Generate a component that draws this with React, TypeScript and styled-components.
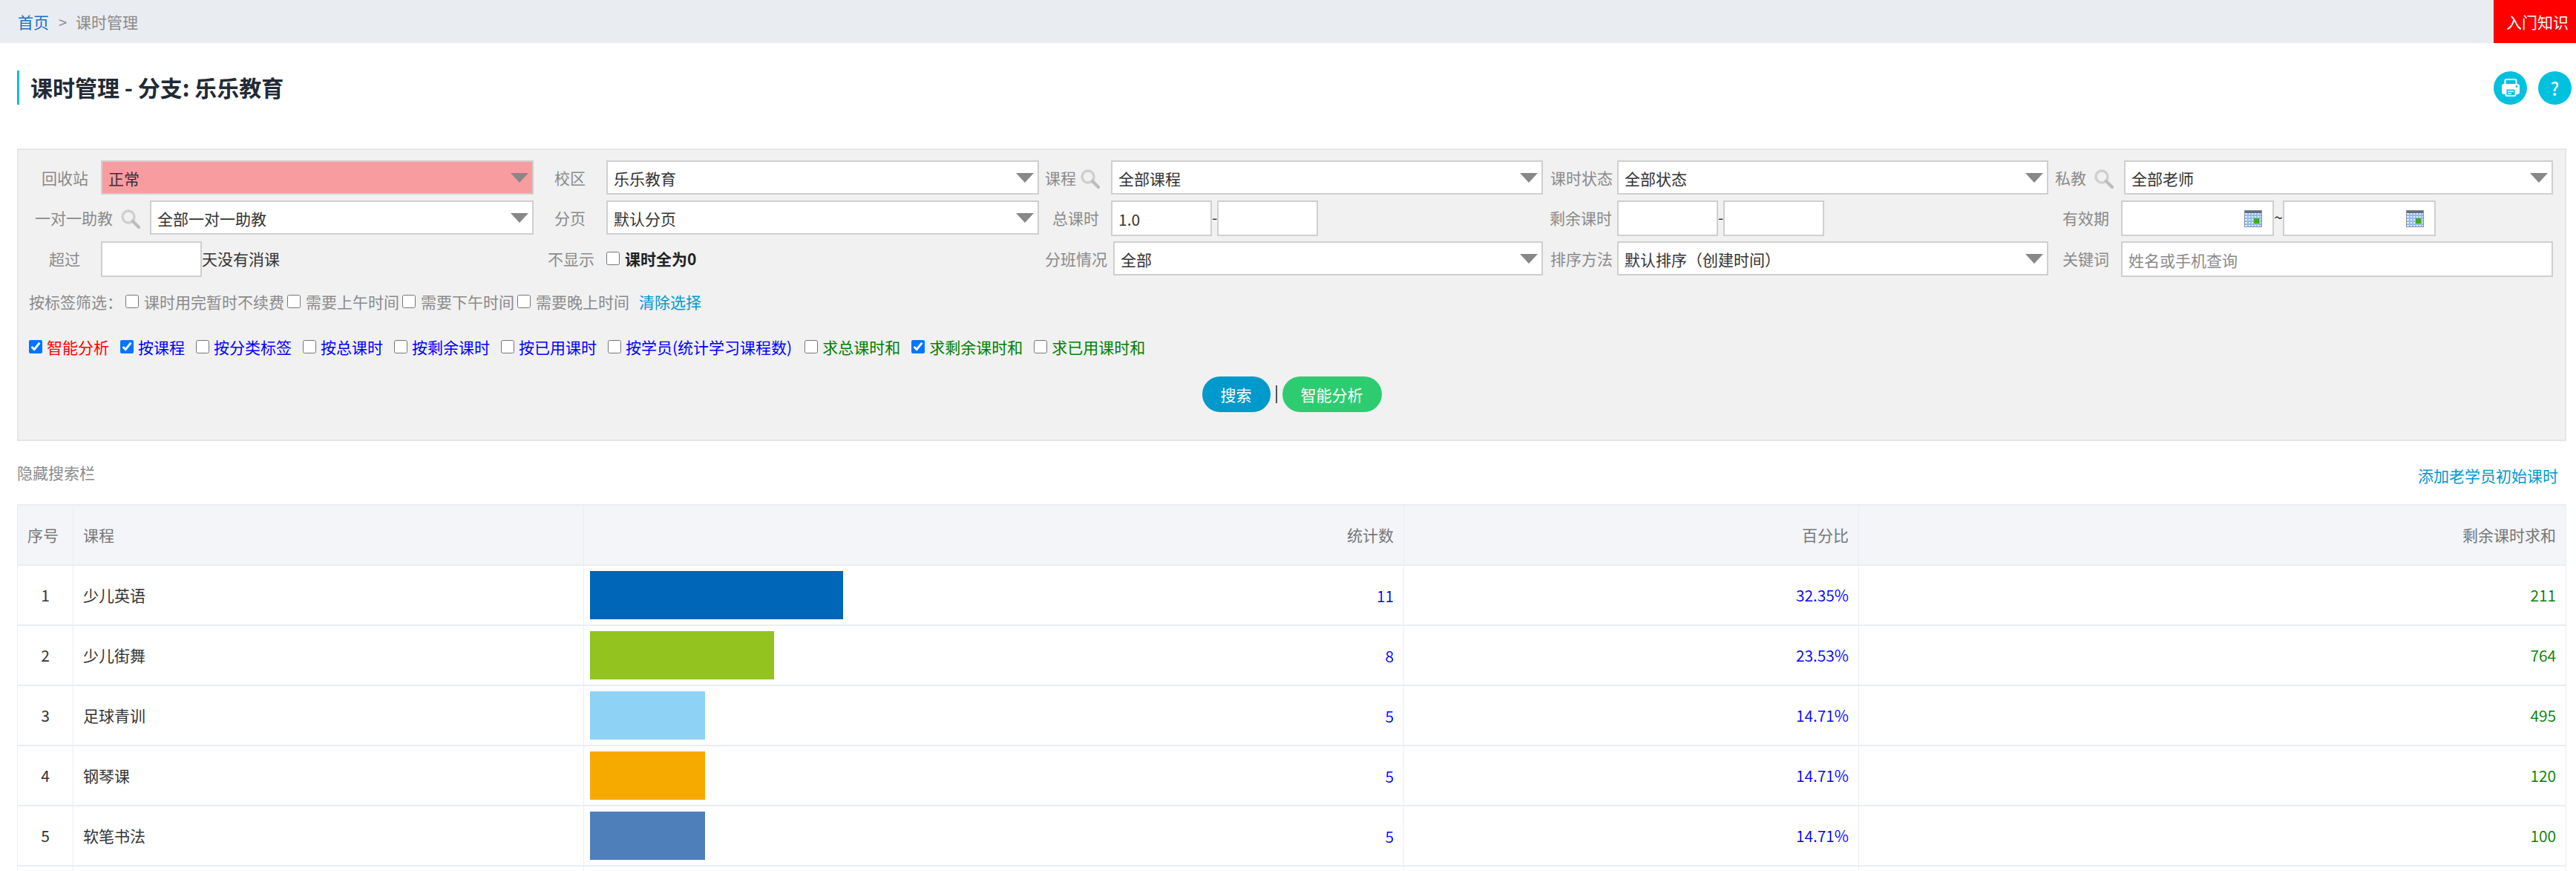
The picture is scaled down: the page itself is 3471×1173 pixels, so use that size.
import React from "react";
import styled, { createGlobalStyle } from "styled-components";

const Global = createGlobalStyle`
  html, body { margin: 0; padding: 0; background: #fff; }
  body { font-family: "Noto Sans CJK SC", "Noto Sans", sans-serif; font-size: 21px; color: #333; }
  * { box-sizing: border-box; }
  #root { height: 100vh; overflow: hidden; }
`;

const TopBar = styled.div`
  height: 58px;
  background: #e9ecf1;
  display: flex;
  align-items: center;
  justify-content: space-between;
`;
const Crumbs = styled.div`
  display: flex;
  align-items: center;
  padding-left: 24px;
  color: #8a8a8a;
`;
const CrumbLink = styled.a`
  color: #1a6fc4;
`;
const CrumbSep = styled.span`
  margin: 0 12px 0 13px;
  font-size: 20px;
`;
const GuideButton = styled.div`
  width: 111px;
  height: 58px;
  background: #ff0000;
  color: #fff;
  display: flex;
  align-items: center;
  justify-content: flex-end;
  padding-right: 10px;
`;

const TitleRow = styled.div`
  margin-top: 37px;
  height: 46px;
  padding: 0 6px 0 23px;
  display: flex;
  align-items: center;
  justify-content: space-between;
`;
const Title = styled.h1`
  margin: 0;
  height: 46px;
  border-left: 3px solid #00c1de;
  padding-left: 15px;
  font-size: 30px;
  line-height: 44px;
  font-weight: 700;
  color: #222a35;
`;
const RoundIcons = styled.div`
  display: flex;
  gap: 15px;
`;
const RoundIcon = styled.div`
  width: 45px;
  height: 45px;
  border-radius: 50%;
  background: #00c1de;
  color: #fff;
  font-size: 24px;
  font-weight: 500;
  display: flex;
  align-items: center;
  justify-content: center;
`;

const Panel = styled.div`
  margin: 59px 13px 0 23px;
  height: 394px;
  background: #f1f1f1;
  border: 2px solid #e6e6e6;
  padding: 14px 16px 0 0;
`;
const GridRow = styled.div<{ $h: number; $mt?: number }>`
  display: grid;
  grid-template-columns: 694px 681px 679px 681px 1fr;
  height: ${(p) => p.$h}px;
  margin-top: ${(p) => p.$mt ?? 0}px;
`;
const Field = styled.div`
  display: flex;
  align-items: flex-start;
  min-width: 0;
`;
const Label = styled.div<{ $w: number; $pl: number }>`
  flex: none;
  width: ${(p) => p.$w}px;
  height: 46px;
  padding-left: ${(p) => p.$pl}px;
  display: flex;
  align-items: center;
  color: #8a8a8a;
  white-space: nowrap;
`;
const SearchGlyph = styled.svg<{ $gap: number }>`
  flex: none;
  width: 26px;
  height: 26px;
  margin: 4px 0 0 ${(p) => p.$gap}px;
`;
const SelectWrap = styled.div`
  position: relative;
  flex: 1;
  height: 46px;
  &::after {
    content: "";
    position: absolute;
    right: 7px;
    top: 17px;
    border-left: 12px solid transparent;
    border-right: 12px solid transparent;
    border-top: 13px solid #888;
    pointer-events: none;
  }
`;
const Select = styled.select<{ $bg?: string }>`
  appearance: none;
  width: 100%;
  height: 46px;
  border: 2px solid #cfcfcf;
  border-radius: 0;
  background: ${(p) => p.$bg ?? "#fff"};
  padding: 2px 30px 0 8px;
  font: inherit;
  color: #333;
  outline: none;
`;
const TextInput = styled.input<{ $w?: number }>`
  width: ${(p) => (p.$w ? `${p.$w}px` : "100%")};
  flex: ${(p) => (p.$w ? "none" : "1")};
  height: 48px;
  border: 2px solid #cfcfcf;
  border-radius: 0;
  background: #fff;
  padding: 2px 8px 0;
  font: inherit;
  color: #333;
  outline: none;
  &::placeholder { color: #8a8a8a; opacity: 1; }
`;
const RangeSep = styled.span<{ $w: number }>`
  flex: none;
  width: ${(p) => p.$w}px;
  height: 48px;
  line-height: 44px;
  text-align: center;
  color: #333;
`;
const DateBox = styled.div`
  position: relative;
  flex: none;
  width: 206px;
  height: 48px;
`;
const CalendarGlyph = styled.svg`
  position: absolute;
  right: 16px;
  top: 13px;
  width: 24px;
  height: 23px;
`;
const Suffix = styled.span`
  height: 48px;
  line-height: 46px;
  color: #333;
  white-space: nowrap;
`;
const Box = styled.input`
  flex: none;
  width: 18px;
  height: 18px;
  margin: 0;
`;
const InlineCheck = styled.label`
  height: 46px;
  display: flex;
  align-items: center;
  gap: 7px;
  font-weight: 700;
  color: #222;
`;

const TagRow = styled.div`
  margin-top: 18px;
  height: 30px;
  padding-left: 14px;
  display: flex;
  align-items: center;
  color: #8a8a8a;
  white-space: nowrap;
`;
const TagTitle = styled.span`
  width: 130px;
`;
const TagItem = styled.label`
  display: flex;
  align-items: center;
  gap: 7px;
  margin-right: 4px;
`;
const ClearLink = styled.a`
  margin-left: 9px;
  color: #0099cc;
`;

const OptionRow = styled.div`
  margin-top: 31px;
  height: 30px;
  padding-left: 14px;
  display: flex;
  align-items: center;
  gap: 15px;
  white-space: nowrap;
`;
const OptionItem = styled.label<{ $color: string; $ml: number }>`
  display: flex;
  align-items: center;
  gap: 6px;
  margin-left: ${(p) => p.$ml}px;
  color: ${(p) => p.$color};
`;

const Actions = styled.div`
  margin-top: 25px;
  display: flex;
  justify-content: center;
  align-items: center;
  gap: 7px;
  padding-left: 16px;
`;
const ActionButton = styled.button<{ $bg: string; $w: number }>`
  width: ${(p) => p.$w}px;
  height: 48px;
  border: 0;
  border-radius: 24px;
  background: ${(p) => p.$bg};
  color: #fff;
  font: inherit;
  padding: 0;
`;
const ActionDivider = styled.span`
  width: 2px;
  height: 24px;
  background: #555;
`;

const ToolRow = styled.div`
  height: 85px;
  margin: 0 24px 0 23px;
  display: flex;
  align-items: center;
  justify-content: space-between;
`;
const HideLink = styled.a`
  color: #8a8a8a;
  margin-top: -2px;
`;
const AddLink = styled.a`
  color: #0099cc;
  margin-top: 6px;
`;

const Table = styled.table`
  margin-left: 23px;
  width: 3434px;
  table-layout: fixed;
  border-collapse: collapse;
  & th, & td {
    height: 81px;
    padding: 0 13px 2px;
    border: 2px solid #e9edf4;
    border-left-width: 1px;
    border-right-width: 1px;
    font-weight: 400;
  }
`;
const Head = styled.th<{ $align?: string }>`
  background: #f3f5f9;
  color: #777;
  text-align: ${(p) => p.$align ?? "left"};
`;
const IndexCell = styled.td`
  text-align: center;
  color: #333;
`;
const NameCell = styled.td`
  color: #333;
`;
const BarCell = styled.td`
  && { padding: 0 13px 0 8px; font-weight: 350; }
`;
const BarLine = styled.div`
  display: flex;
  align-items: center;
  justify-content: space-between;
  color: #0000ff;
`;
const Bar = styled.div<{ $color: string }>`
  height: 65px;
  background: ${(p) => p.$color};
`;
const NumCell = styled.td<{ $color: string }>`
  && { font-weight: 350; }
  text-align: right;
  color: ${(p) => p.$color};
`;

const Magnifier = ({ gap }: { gap: number }) => (
  <SearchGlyph $gap={gap} viewBox="0 0 26 26">
    <circle cx="10" cy="10" r="8" fill="none" stroke="#cfcfcf" strokeWidth="3.4" />
    <path d="M16 16l8 8" stroke="#bdbdbd" strokeWidth="4.4" strokeLinecap="round" />
  </SearchGlyph>
);

const Calendar = () => (
  <CalendarGlyph viewBox="0 0 24 23">
    <rect x="0" y="0" width="24" height="23" fill="#8d8d8d" />
    <rect x="1" y="1" width="22" height="3" fill="#5f6b80" />
    <rect x="1" y="4" width="22" height="18" fill="#e4eefc" />
    <path d="M1 7h22M1 11h22M1 15h22M1 19h22M5 4v18M9 4v18M13 4v18M17 4v18M21 4v18" stroke="#8fb9f2" strokeWidth="1.8" fill="none" />
    <rect x="13" y="11" width="7" height="7" fill="#3fae1c" />
  </CalendarGlyph>
);

const Printer = () => (
  <svg width="24" height="24" viewBox="0 0 24 24" fill="none">
    <path d="M4.5 8V2.5A1.5 1.5 0 0 1 6 1h12a1.5 1.5 0 0 1 1.5 1.5V8" stroke="#fff" strokeWidth="2" />
    <path d="M3 7h18a3 3 0 0 1 3 3v8a3 3 0 0 1-3 3H3a3 3 0 0 1-3-3v-8a3 3 0 0 1 3-3z" fill="#fff" />
    <circle cx="20" cy="10.5" r="1.4" fill="#00c1de" />
    <rect x="5.5" y="13.5" width="13" height="9.5" rx="1" fill="#00c1de" stroke="#fff" strokeWidth="2" />
    <path d="M8 17h8M8 20h5" stroke="#fff" strokeWidth="1.6" />
  </svg>
);

const SelectField = ({ value, bg }: { value: string; bg?: string }) => (
  <SelectWrap>
    <Select $bg={bg} defaultValue={value}>
      <option>{value}</option>
    </Select>
  </SelectWrap>
);

const DateField = () => (
  <DateBox>
    <TextInput />
    <Calendar />
  </DateBox>
);

const tags = ["课时用完暂时不续费", "需要上午时间", "需要下午时间", "需要晚上时间"];
const options = [
  { text: "智能分析", color: "#ff0000", on: true, ml: 0 },
  { text: "按课程", color: "#0000ff", on: true, ml: 0 },
  { text: "按分类标签", color: "#0000ff", on: false, ml: 0 },
  { text: "按总课时", color: "#0000ff", on: false, ml: 0 },
  { text: "按剩余课时", color: "#0000ff", on: false, ml: 0 },
  { text: "按已用课时", color: "#0000ff", on: false, ml: 0 },
  { text: "按学员(统计学习课程数)", color: "#0000ff", on: false, ml: 0 },
  { text: "求总课时和", color: "#008000", on: false, ml: 2 },
  { text: "求剩余课时和", color: "#008000", on: true, ml: 0 },
  { text: "求已用课时和", color: "#008000", on: false, ml: 0 },
];
const rows = [
  { name: "少儿英语", width: 341, color: "#0066b8", count: 11, pct: "32.35%", sum: 211 },
  { name: "少儿街舞", width: 248, color: "#93c31f", count: 8, pct: "23.53%", sum: 764 },
  { name: "足球青训", width: 155, color: "#8ed2f6", count: 5, pct: "14.71%", sum: 495 },
  { name: "钢琴课", width: 155, color: "#f6aa00", count: 5, pct: "14.71%", sum: 120 },
  { name: "软笔书法", width: 155, color: "#4f7fba", count: 5, pct: "14.71%", sum: 100 },
];

export default function App() {
  return (
    <>
      <Global />
      <TopBar>
        <Crumbs>
          <CrumbLink>首页</CrumbLink>
          <CrumbSep>&gt;</CrumbSep>
          <span>课时管理</span>
        </Crumbs>
        <GuideButton>入门知识</GuideButton>
      </TopBar>

      <TitleRow>
        <Title>课时管理 - 分支: 乐乐教育</Title>
        <RoundIcons>
          <RoundIcon><Printer /></RoundIcon>
          <RoundIcon>?</RoundIcon>
        </RoundIcons>
      </TitleRow>

      <Panel>
        <GridRow $h={46}>
          <Field><Label $w={111} $pl={31}>回收站</Label><SelectField value="正常" bg="#f99ca0" /></Field>
          <Field><Label $w={98} $pl={28}>校区</Label><SelectField value="乐乐教育" /></Field>
          <Field><Label $w={97} $pl={8}>课程<Magnifier gap={6} /></Label><SelectField value="全部课程" /></Field>
          <Field><Label $w={100} $pl={10}>课时状态</Label><SelectField value="全部状态" /></Field>
          <Field><Label $w={102} $pl={9}>私教<Magnifier gap={11} /></Label><SelectField value="全部老师" /></Field>
        </GridRow>
        <GridRow $h={48} $mt={8}>
          <Field><Label $w={177} $pl={22}>一对一助教<Magnifier gap={11} /></Label><SelectField value="全部一对一助教" /></Field>
          <Field><Label $w={98} $pl={28}>分页</Label><SelectField value="默认分页" /></Field>
          <Field>
            <Label $w={97} $pl={18}>总课时</Label>
            <TextInput $w={136} defaultValue="1.0" />
            <RangeSep $w={7}>-</RangeSep>
            <TextInput $w={136} />
          </Field>
          <Field>
            <Label $w={100} $pl={9}>剩余课时</Label>
            <TextInput $w={136} />
            <RangeSep $w={7}>-</RangeSep>
            <TextInput $w={136} />
          </Field>
          <Field>
            <Label $w={98} $pl={19}>有效期</Label>
            <DateField />
            <RangeSep $w={12}>~</RangeSep>
            <DateField />
          </Field>
        </GridRow>
        <GridRow $h={48} $mt={7}>
          <Field>
            <Label $w={111} $pl={41}>超过</Label>
            <TextInput $w={136} />
            <Suffix>天没有消课</Suffix>
          </Field>
          <Field>
            <Label $w={98} $pl={19}>不显示</Label>
            <InlineCheck><Box type="checkbox" />课时全为0</InlineCheck>
          </Field>
          <Field><Label $w={100} $pl={8}>分班情况</Label><SelectField value="全部" /></Field>
          <Field><Label $w={100} $pl={10}>排序方法</Label><SelectField value="默认排序（创建时间）" /></Field>
          <Field>
            <Label $w={98} $pl={19}>关键词</Label>
            <TextInput placeholder="姓名或手机查询" />
          </Field>
        </GridRow>

        <TagRow>
          <TagTitle>按标签筛选：</TagTitle>
          {tags.map((t) => (
            <TagItem key={t}><Box type="checkbox" />{t}</TagItem>
          ))}
          <ClearLink>清除选择</ClearLink>
        </TagRow>

        <OptionRow>
          {options.map((o) => (
            <OptionItem key={o.text} $color={o.color} $ml={o.ml}>
              <Box type="checkbox" defaultChecked={o.on} />
              {o.text}
            </OptionItem>
          ))}
        </OptionRow>

        <Actions>
          <ActionButton $bg="#0099cc" $w={92}>搜索</ActionButton>
          <ActionDivider />
          <ActionButton $bg="#2ecc71" $w={134}>智能分析</ActionButton>
        </Actions>
      </Panel>

      <ToolRow>
        <HideLink>隐藏搜索栏</HideLink>
        <AddLink>添加老学员初始课时</AddLink>
      </ToolRow>

      <Table>
        <colgroup>
          <col style={{ width: 75 }} />
          <col style={{ width: 688 }} />
          <col style={{ width: 1105 }} />
          <col style={{ width: 613 }} />
          <col style={{ width: 953 }} />
        </colgroup>
        <thead>
          <tr>
            <Head>序号</Head>
            <Head>课程</Head>
            <Head $align="right">统计数</Head>
            <Head $align="right">百分比</Head>
            <Head $align="right">剩余课时求和</Head>
          </tr>
        </thead>
        <tbody>
          {rows.map((r, i) => (
            <tr key={r.name}>
              <IndexCell>{i + 1}</IndexCell>
              <NameCell>{r.name}</NameCell>
              <BarCell>
                <BarLine>
                  <Bar $color={r.color} style={{ width: r.width }} />
                  {r.count}
                </BarLine>
              </BarCell>
              <NumCell $color="#0000ff">{r.pct}</NumCell>
              <NumCell $color="#008000">{r.sum}</NumCell>
            </tr>
          ))}
          <tr><td /><td /><td /><td /><td /></tr>
        </tbody>
      </Table>
    </>
  );
}
